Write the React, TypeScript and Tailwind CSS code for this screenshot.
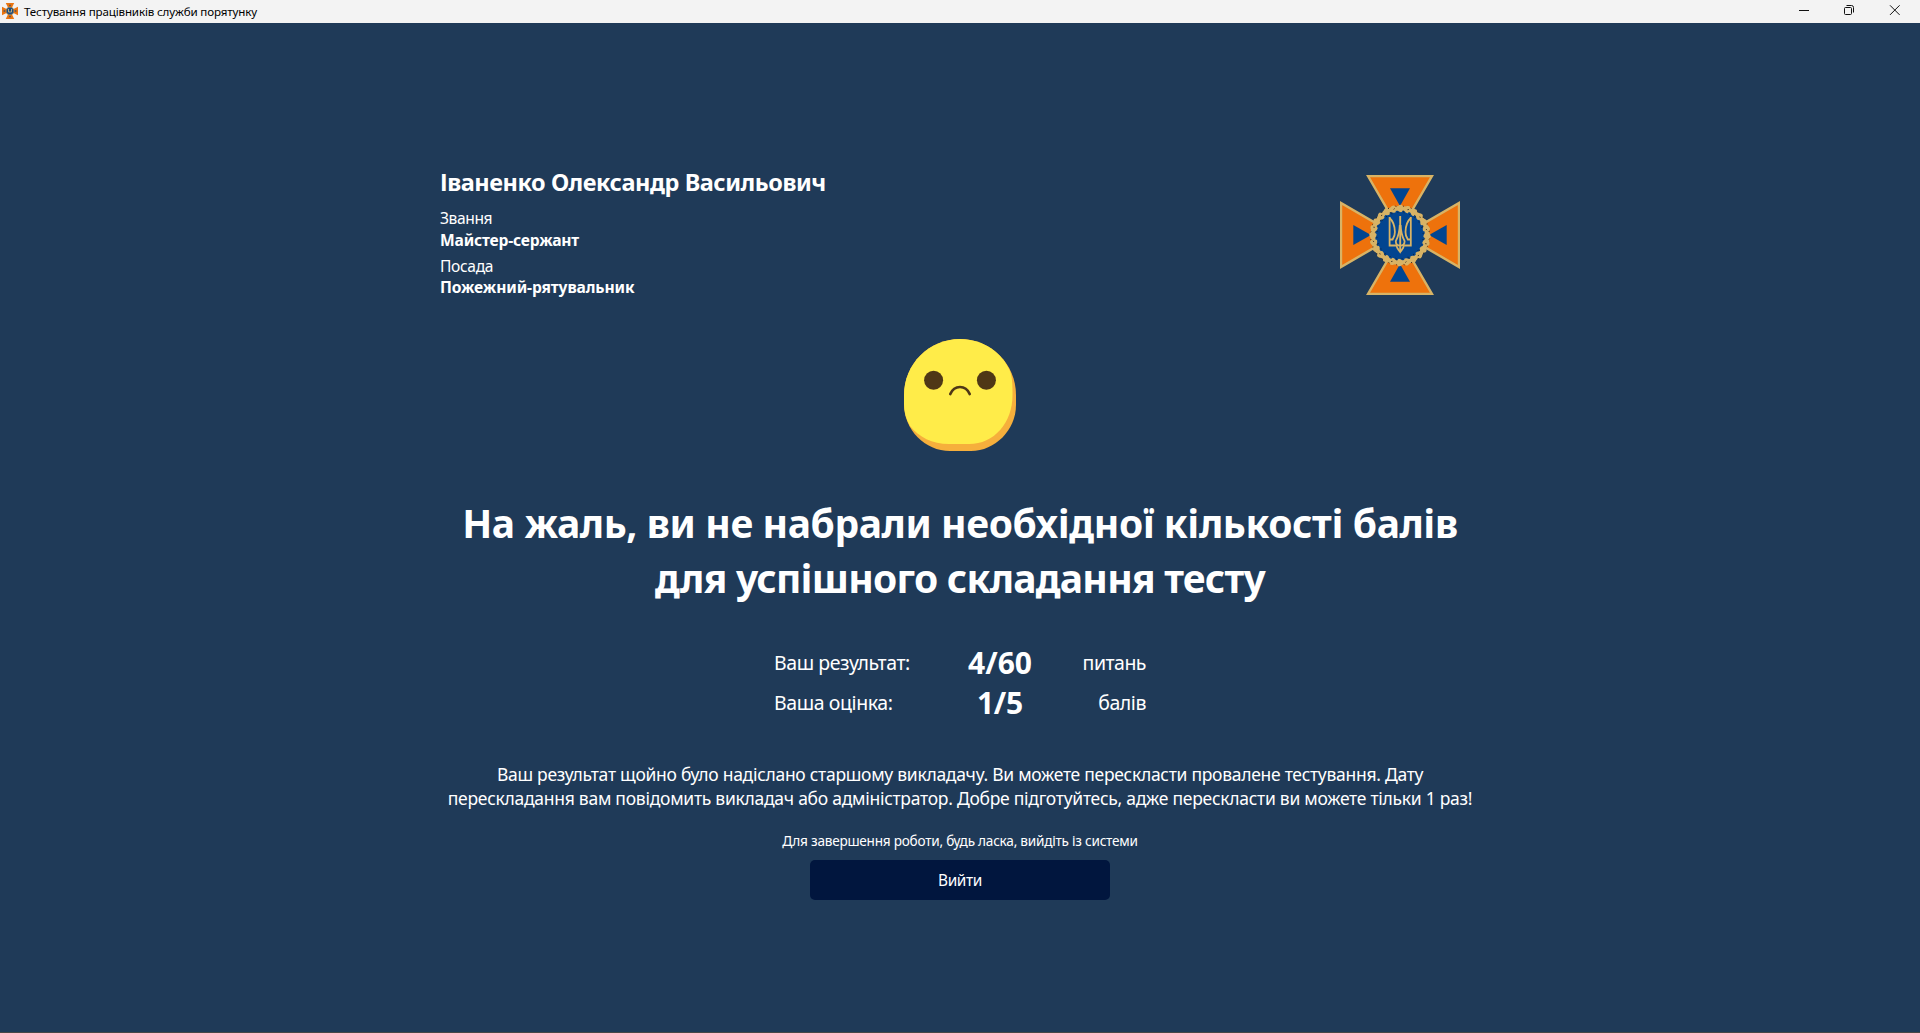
const GOLD = '#d8b365';
const ORANGE = '#ee720c';
const BLUE = '#024590';

const LEAVES = Array.from({ length: 24 }, (_, i) => i * 15);

const ARM = 'M28 1 H92 L70.5 38 H49.5 Z';
const ROTATIONS = [0, 90, 180, 270];

function Emblem() {
  return (
    <svg className="h-[120px] w-[120px]" viewBox="0 0 120 120">
      {ROTATIONS.map((r) => (
        <g key={r} transform={`rotate(${r} 60 60)`}>
          <path d={ARM} fill={ORANGE} stroke={GOLD} strokeWidth="2.4" />
          <path d="M50 13.3 H70 L60 31 Z" fill={BLUE} />
        </g>
      ))}
      <circle cx="60" cy="60.5" r="27.5" fill={BLUE} />
      <circle cx="60" cy="60.5" r="27.2" fill="none" stroke={GOLD} strokeWidth="4.6" />
      {LEAVES.map((a, i) => (
        <g key={a} transform={`rotate(${a} 60 60.5)`}>
          <ellipse cx="60" cy="31.7" rx="2.7" ry="1.7" fill={GOLD} transform="rotate(-22 60 31.7)" />
          <ellipse cx="60" cy="35.4" rx="2.4" ry="1.5" fill={GOLD} transform="rotate(22 60 35.4)" />
          <path d={i % 2 ? 'M60.6 33.6 l1.2 -.5' : 'M63 35.8 l1 .8'} stroke="#2a2520" strokeWidth=".8" />
          <path d="M63.2 31 l.8 .6 M57.4 37.2 l.9 .3" stroke="#1b1a20" strokeWidth=".8" />
        </g>
      ))}
      <g fill="none" stroke={GOLD} strokeWidth="1.8">
        <path d="M49.6 42 V70.5 H56.2 M70.8 42 V70.5 H64.2" />
        <path d="M49.6 43 C53 46 54.8 51 54.9 57 C55 60 54.2 62 52.6 64.5 H49.6 M70.8 43 C67.4 46 65.6 51 65.5 57 C65.4 60 66.2 62 67.8 64.5 H70.8" />
        <path d="M60.2 41 V77" strokeWidth="1.9" />
        <path d="M59.8 50 C59.6 57 58 62 55.8 66.2 C55.8 69.5 57.6 70.6 60.2 70.6 C62.8 70.6 64.6 69.5 64.6 66.2 C62.4 62 60.8 57 60.6 50" />
        <path d="M56.4 70 C56.8 74 58.6 74.5 60.2 77 C61.8 74.5 63.6 74 64 70" />
      </g>
    </svg>
  );
}

function TitleIcon() {
  return (
    <svg className="-mt-px h-4 w-4" viewBox="0 0 16 16">
      {ROTATIONS.map((r) => (
        <g key={r} transform={`rotate(${r} 8 8)`}>
          <path d="M3.8 0 H12.2 L9.8 5 H6.2 Z" fill="#ec750f" />
          <path d="M6.7 1.7 H9.3 L8 3.8 Z" fill="#4c5560" />
        </g>
      ))}
      <circle cx="8" cy="8" r="3.8" fill="#164a86" stroke="#8f8058" strokeWidth=".8" />
      <path d="M6.5 6 V9 H9.5 V6" fill="none" stroke="#c9b57a" strokeWidth=".9" />
    </svg>
  );
}

function SadFace() {
  return (
    <svg className="mx-auto block h-28 w-28" viewBox="0 0 112 112">
      <path
        d="M0 56 C0 25 25 0 56 0 C87 0 112 25 112 56 V66 C112 91 91 112 67 112 H46 C21 112 0 91 0 65 Z"
        fill="#f6af3c"
      />
      <path
        d="M0 56 C0 25 25 0 56 0 C80 0 98 14 106 32 C108 38 108.5 44 108.5 56 C108.5 84 90 105 65 105 H45 C28 105 15 98 6 87 C2 80 0 73 0 65 Z"
        fill="#ffec49"
      />
      <circle cx="29.6" cy="41.3" r="9.5" fill="#4f3716" />
      <circle cx="82.4" cy="41.3" r="9.5" fill="#4f3716" />
      <path
        d="M46.3 55 C48.5 50 52 48 56 48 C60 48 63.5 50 65.7 55"
        fill="none"
        stroke="#4f3716"
        strokeWidth="2.7"
        strokeLinecap="round"
      />
    </svg>
  );
}

function TitleBar() {
  return (
    <header className="flex h-[23px] items-center justify-between bg-[#f3f3f3] text-black">
      <div className="flex items-center gap-[6px] pl-[2px]">
        <TitleIcon />
        <span className="text-[11.6px] leading-[22px] tracking-[-0.15px] whitespace-nowrap">
          Тестування працівників служби порятунку
        </span>
      </div>
      <svg className="h-[23px] w-[138px]" viewBox="0 0 138 23" fill="none" stroke="#111">
        <path d="M17 10.5 H27" />
        <rect x="62.5" y="7.5" width="7" height="7" rx="1" />
        <path d="M64.5 5.5 H69.5 Q71.5 5.5 71.5 7.5 V12.5" />
        <path d="M108 5.3 L117.6 14.9 M117.6 5.3 L108 14.9" />
      </svg>
    </header>
  );
}

export default function App() {
  return (
    <div
      className="flex h-[1033px] w-full flex-col overflow-hidden border-b border-[#474747] bg-[#1f3a58] text-white"
      style={{ fontFamily: '"Noto Sans", "Open Sans", sans-serif' }}
    >
      <TitleBar />
      <main className="mx-auto w-[1040px] pt-[143px]">
        <section className="flex items-start justify-between">
          <div className="whitespace-nowrap">
            <h2 className="text-[23.5px] leading-8 font-bold tracking-[-0.44px]">
              Іваненко Олександр Васильович
            </h2>
            <p className="mt-[10px] text-[15.6px] leading-5 tracking-[-0.4px]">Звання</p>
            <p className="mt-[2px] text-[15.6px] leading-5 font-bold tracking-[-0.18px]">Майстер-сержант</p>
            <p className="mt-[6px] text-[15.6px] leading-5 tracking-[-0.35px]">Посада</p>
            <p className="mt-[1px] text-[15.6px] leading-5 font-bold tracking-[-0.12px]">Пожежний-рятувальник</p>
          </div>
          <div className="mt-[9px] mr-5">
            <Emblem />
          </div>
        </section>

        <div className="mt-[42px]">
          <SadFace />
        </div>

        <h1 className="mt-[44px] text-center text-[39px] leading-[55px] font-bold whitespace-nowrap">
          <span className="block tracking-[-0.41px]">На жаль, ви не набрали необхідної кількості балів</span>
          <span className="block tracking-[-0.75px]">для успішного складання тесту</span>
        </h1>

        <section className="mx-auto mt-[38px] grid w-[372px] grid-cols-[166px_120px_86px] leading-10 whitespace-nowrap">
          <span className="text-[19.5px] tracking-[-0.42px]">Ваш результат:</span>
          <b className="text-center text-[30px]">4/60</b>
          <span className="text-right text-[19.5px] tracking-[-0.5px]">питань</span>
          <span className="text-[19.5px] tracking-[-0.4px]">Ваша оцінка:</span>
          <b className="text-center text-[30px] tracking-[-0.2px]">1/5</b>
          <span className="text-right text-[19.5px] tracking-[-0.45px]">балів</span>
        </section>

        <p className="mt-[39px] text-center text-[17.5px] leading-6 whitespace-nowrap">
          <span className="block tracking-[-0.286px]">
            Ваш результат щойно було надіслано старшому викладачу. Ви можете перескласти провалене тестування. Дату
          </span>
          <span className="block tracking-[-0.27px]">
            перескладання вам повідомить викладач або адміністратор. Добре підготуйтесь, адже перескласти ви можете
            тільки 1 раз!
          </span>
        </p>

        <p className="mt-[21px] text-center text-[13.6px] leading-5 tracking-[-0.238px]">
          Для завершення роботи, будь ласка, вийдіть із системи
        </p>
        <button className="mx-auto mt-[9px] block h-10 w-[300px] rounded-[5px] bg-[#01163e] text-[15.4px] leading-[42px] tracking-[-0.4px]">
          Вийти
        </button>
      </main>
    </div>
  );
}
